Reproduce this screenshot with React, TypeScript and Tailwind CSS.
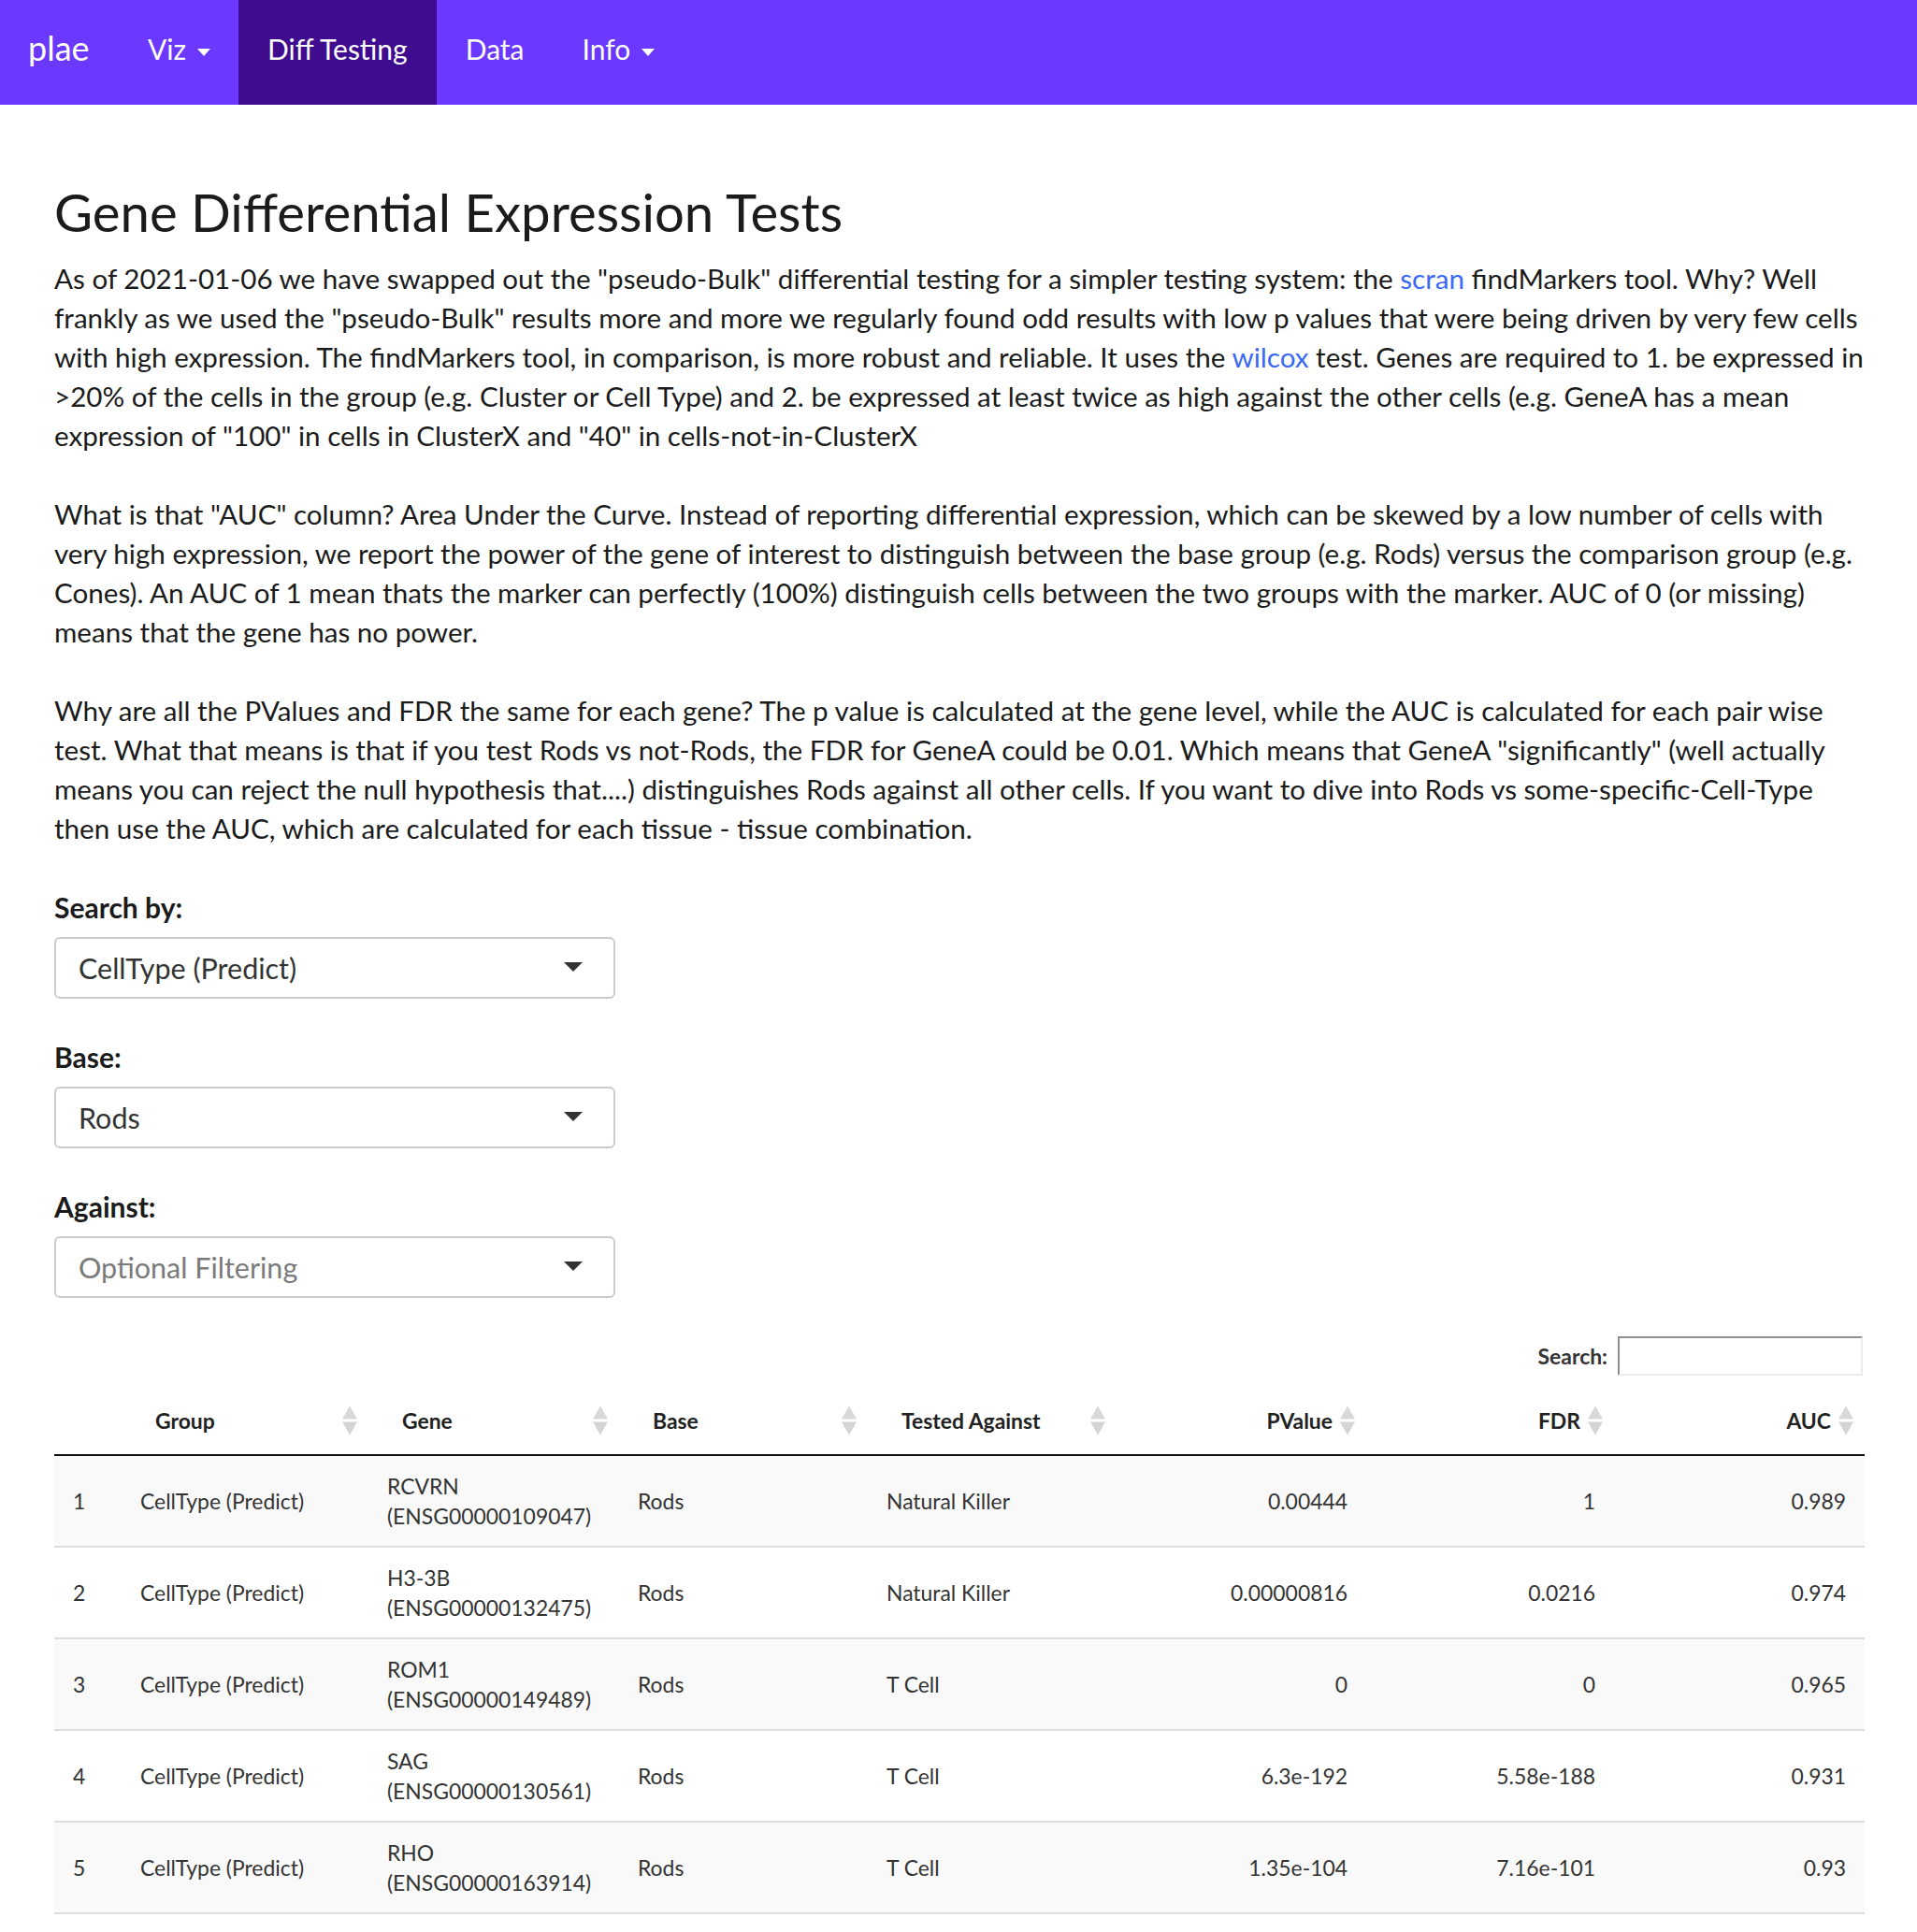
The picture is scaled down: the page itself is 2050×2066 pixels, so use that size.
import React from "react";

const Caret = ({ className }: { className?: string }) => (
  <svg width="14" height="8" viewBox="0 0 14 8" className={className}>
    <polygon points="0,0 14,0 7,8" fill="#ffffff" />
  </svg>
);

const SortIcon = () => (
  <svg
    width="16"
    height="31"
    viewBox="0 0 16 31"
    className="absolute right-[12px] top-1/2 -translate-y-1/2"
  >
    <polygon points="8,0 16,14 0,14" fill="#d9d9d9" />
    <polygon points="0,17 16,17 8,31" fill="#d4d4d4" />
  </svg>
);

const Select = ({ value, placeholder }: { value: string; placeholder?: boolean }) => (
  <div className="flex h-[66px] w-[600px] items-center justify-between rounded-[6px] border-2 border-[#cccccc] bg-white pl-[24px] pr-[33px]">
    <span
      className={
        "text-[30.5px] leading-[36px] " + (placeholder ? "text-[#7a7a7a]" : "text-[#333333]")
      }
    >
      {value}
    </span>
    <svg width="20" height="10" viewBox="0 0 20 10" className="-mt-[3px]">
      <polygon points="0,0 20,0 10,10" fill="#333333" />
    </svg>
  </div>
);

const rows = [
  ["1", "CellType (Predict)", "RCVRN", "(ENSG00000109047)", "Rods", "Natural Killer", "0.00444", "1", "0.989"],
  ["2", "CellType (Predict)", "H3-3B", "(ENSG00000132475)", "Rods", "Natural Killer", "0.00000816", "0.0216", "0.974"],
  ["3", "CellType (Predict)", "ROM1", "(ENSG00000149489)", "Rods", "T Cell", "0", "0", "0.965"],
  ["4", "CellType (Predict)", "SAG", "(ENSG00000130561)", "Rods", "T Cell", "6.3e-192", "5.58e-188", "0.931"],
  ["5", "CellType (Predict)", "RHO", "(ENSG00000163914)", "Rods", "T Cell", "1.35e-104", "7.16e-101", "0.93"],
];

const Link = ({ children }: { children: React.ReactNode }) => (
  <a className="text-[#3a6af5]">{children}</a>
);

export default function App() {
  return (
    <div
      className="min-h-[2066px] bg-white text-[#1b1b1b]"
      style={{ fontFamily: "Lato, 'Noto Sans', sans-serif" }}
    >
      {/* Navbar */}
      <nav className="flex h-[112px] bg-[#6a38ff] text-white">
        <div className="w-[128px] pl-[30px] pt-[31px] text-[36px] leading-[40px]">plae</div>
        <div className="flex items-start gap-[12px] px-[30px] pt-[35px] text-[30px] leading-[35px]">
          <span>Viz</span>
          <Caret className="mt-[17px]" />
        </div>
        <div className="bg-[#3f0b8f] px-[31px] pt-[35px] text-[30px] leading-[35px]">Diff Testing</div>
        <div className="px-[31px] pt-[35px] text-[30px] leading-[35px]">Data</div>
        <div className="flex items-start gap-[12px] px-[31px] pt-[35px] text-[30px] leading-[35px]">
          <span>Info</span>
          <Caret className="mt-[17px]" />
        </div>
      </nav>

      <main className="px-[58px] pb-[18px]">
        <h1 className="mb-[17px] mt-[81px] text-[56.3px] font-normal leading-[67px] text-[#1b1b1b]">
          Gene Differential Expression Tests
        </h1>

        <div className="text-[29.6px] leading-[42px]">
          <p className="mb-[42px] whitespace-nowrap">
            As of 2021-01-06 we have swapped out the "pseudo-Bulk" differential testing for a simpler testing system:
            the <Link>scran</Link> findMarkers tool. Why? Well
            <br />
            frankly as we used the "pseudo-Bulk" results more and more we regularly found odd results with low p values
            that were being driven by very few cells
            <br />
            with high expression. The findMarkers tool, in comparison, is more robust and reliable. It uses the{" "}
            <Link>wilcox</Link> test. Genes are required to 1. be expressed in
            <br />
            &gt;20% of the cells in the group (e.g. Cluster or Cell Type) and 2. be expressed at least twice as high
            against the other cells (e.g. GeneA has a mean
            <br />
            expression of "100" in cells in ClusterX and "40" in cells-not-in-ClusterX
          </p>
          <p className="mb-[42px] whitespace-nowrap">
            What is that "AUC" column? Area Under the Curve. Instead of reporting differential expression, which can be
            skewed by a low number of cells with
            <br />
            very high expression, we report the power of the gene of interest to distinguish between the base group
            (e.g. Rods) versus the comparison group (e.g.
            <br />
            Cones). An AUC of 1 mean thats the marker can perfectly (100%) distinguish cells between the two groups
            with the marker. AUC of 0 (or missing)
            <br />
            means that the gene has no power.
          </p>
          <p className="mb-[42px] whitespace-nowrap">
            Why are all the PValues and FDR the same for each gene? The p value is calculated at the gene level, while
            the AUC is calculated for each pair wise
            <br />
            test. What that means is that if you test Rods vs not-Rods, the FDR for GeneA could be 0.01. Which means
            that GeneA "significantly" (well actually
            <br />
            means you can reject the null hypothesis that....) distinguishes Rods against all other cells. If you want
            to dive into Rods vs some-specific-Cell-Type
            <br />
            then use the AUC, which are calculated for each tissue - tissue combination.
          </p>

          <div className="mb-[41px]">
            <div className="mb-[11px] text-[30px] font-bold">Search by:</div>
            <Select value="CellType (Predict)" />
          </div>
          <div className="mb-[41px]">
            <div className="mb-[11px] text-[30px] font-bold">Base:</div>
            <Select value="Rods" />
          </div>
          <div className="mb-[41px]">
            <div className="mb-[11px] text-[30px] font-bold">Against:</div>
            <Select value="Optional Filtering" placeholder />
          </div>
        </div>

        {/* Table */}
        <div className="text-[22.9px] leading-[32px] text-[#333333]">
          <div className="mb-[12px] flex items-center justify-end">
            <span className="mr-[11px] font-bold">Search:</span>
            <input
              className="h-[42px] w-[262px] border-2 border-b-[#ececec] border-l-[#8f8f8f] border-r-[#ececec] border-t-[#8f8f8f] bg-white outline-none"
              type="text"
            />
          </div>
          <table className="w-full table-fixed border-collapse">
            <thead>
              <tr className="border-b-2 border-[#111111] text-[#222222]">
                <th className="w-[72px] py-[20px]"></th>
                <th className="relative w-[264px] py-[20px] pl-[36px] pr-[36px] text-left font-bold">
                  Group
                  <SortIcon />
                </th>
                <th className="relative w-[268px] py-[20px] pl-[36px] pr-[36px] text-left font-bold">
                  Gene
                  <SortIcon />
                </th>
                <th className="relative w-[266px] py-[20px] pl-[36px] pr-[36px] text-left font-bold">
                  Base
                  <SortIcon />
                </th>
                <th className="relative w-[266px] py-[20px] pl-[36px] pr-[36px] text-left font-bold">
                  Tested Against
                  <SortIcon />
                </th>
                <th className="relative w-[267px] py-[20px] pl-[36px] pr-[36px] text-right font-bold">
                  PValue
                  <SortIcon />
                </th>
                <th className="relative w-[265px] py-[20px] pl-[36px] pr-[36px] text-right font-bold">
                  FDR
                  <SortIcon />
                </th>
                <th className="relative w-[268px] py-[20px] pl-[36px] pr-[36px] text-right font-bold">
                  AUC
                  <SortIcon />
                </th>
              </tr>
            </thead>
            <tbody>
              {rows.map((r, i) => (
                <tr
                  key={r[0]}
                  className={
                    "border-b-2 border-[#dddddd] " + (i % 2 === 0 ? "bg-[#f9f9f9]" : "bg-white")
                  }
                >
                  <td className="px-[20px] py-[16px] align-middle">{r[0]}</td>
                  <td className="px-[20px] py-[16px] align-middle">{r[1]}</td>
                  <td className="px-[20px] py-[16px] align-middle">
                    {r[2]}
                    <br />
                    {r[3]}
                  </td>
                  <td className="px-[20px] py-[16px] align-middle">{r[4]}</td>
                  <td className="px-[20px] py-[16px] align-middle">{r[5]}</td>
                  <td className="px-[20px] py-[16px] text-right align-middle">{r[6]}</td>
                  <td className="px-[20px] py-[16px] text-right align-middle">{r[7]}</td>
                  <td className="px-[20px] py-[16px] text-right align-middle">{r[8]}</td>
                </tr>
              ))}
            </tbody>
          </table>
        </div>
      </main>
    </div>
  );
}
